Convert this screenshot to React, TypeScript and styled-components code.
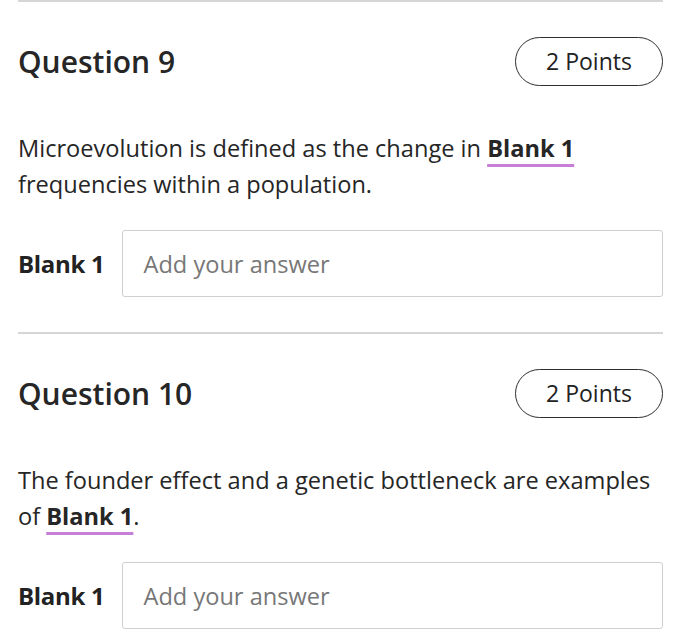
import { FC } from "react";
import styled, { createGlobalStyle } from "styled-components";

const GlobalStyle = createGlobalStyle`
  body {
    margin: 0;
    background: #ffffff;
    font-family: "Open Sans", "Noto Sans", sans-serif;
    color: #242424;
  }
`;

const Page = styled.div`
  width: 645px;
  margin-left: 18px;
`;

const Section = styled.section`
  border-top: 2px solid #d6d6d6;
  padding: 35px 0 35px;
`;

const Header = styled.div`
  display: flex;
  justify-content: space-between;
  align-items: center;
  height: 48px;
`;

const Title = styled.h2`
  margin: 0;
  font-size: 30px;
  font-weight: 600;
  color: #262626;
`;

const PointsPill = styled.div`
  box-sizing: border-box;
  width: 148px;
  height: 49px;
  border: 1.5px solid #2e2e2e;
  border-radius: 25px;
  display: flex;
  align-items: center;
  justify-content: center;
  font-size: 23px;
  font-weight: 500;
  color: #222222;
`;

const Prompt = styled.p`
  margin: 45px 0 0;
  font-size: 23.6px;
  line-height: 36px;
  color: #262626;
`;

const BlankRef = styled.span`
  font-weight: 700;
  text-decoration: underline;
  text-decoration-color: #c77ed6;
  text-decoration-thickness: 3px;
  text-underline-offset: 7px;
  text-decoration-skip-ink: none;
`;

const AnswerRow = styled.div`
  display: flex;
  align-items: center;
  gap: 18px;
  margin-top: 28px;
`;

const BlankLabel = styled.label`
  font-size: 24px;
  font-weight: 700;
  color: #222222;
  letter-spacing: -0.3px;
  white-space: nowrap;
`;

const AnswerInput = styled.input`
  box-sizing: border-box;
  flex: 1;
  height: 67px;
  padding: 0 20px;
  border: 1.5px solid #cfcfcf;
  border-radius: 3px;
  font-family: "Open Sans", "Noto Sans", sans-serif;
  font-size: 23.6px;
  color: #222222;
  outline: none;
  &::placeholder {
    color: #777777;
  }
`;

interface IQuestionProps {
  number: number;
  points: number;
  before: string;
  after: string;
}

const Question: FC<IQuestionProps> = ({ number, points, before, after }) => {
  return (
    <Section>
      <Header>
        <Title>Question {number}</Title>
        <PointsPill>{points} Points</PointsPill>
      </Header>
      <Prompt>
        {before}
        <BlankRef>Blank 1</BlankRef>
        {after}
      </Prompt>
      <AnswerRow>
        <BlankLabel>Blank 1</BlankLabel>
        <AnswerInput placeholder="Add your answer" />
      </AnswerRow>
    </Section>
  );
};

const questions: IQuestionProps[] = [
  {
    number: 9,
    points: 2,
    before: "Microevolution is defined as the change in ",
    after: " frequencies within a population.",
  },
  {
    number: 10,
    points: 2,
    before: "The founder effect and a genetic bottleneck are examples of ",
    after: ".",
  },
];

const App: FC = () => {
  return (
    <Page>
      <GlobalStyle />
      {questions.map((q) => (
        <Question key={q.number} {...q} />
      ))}
    </Page>
  );
};

export default App;
